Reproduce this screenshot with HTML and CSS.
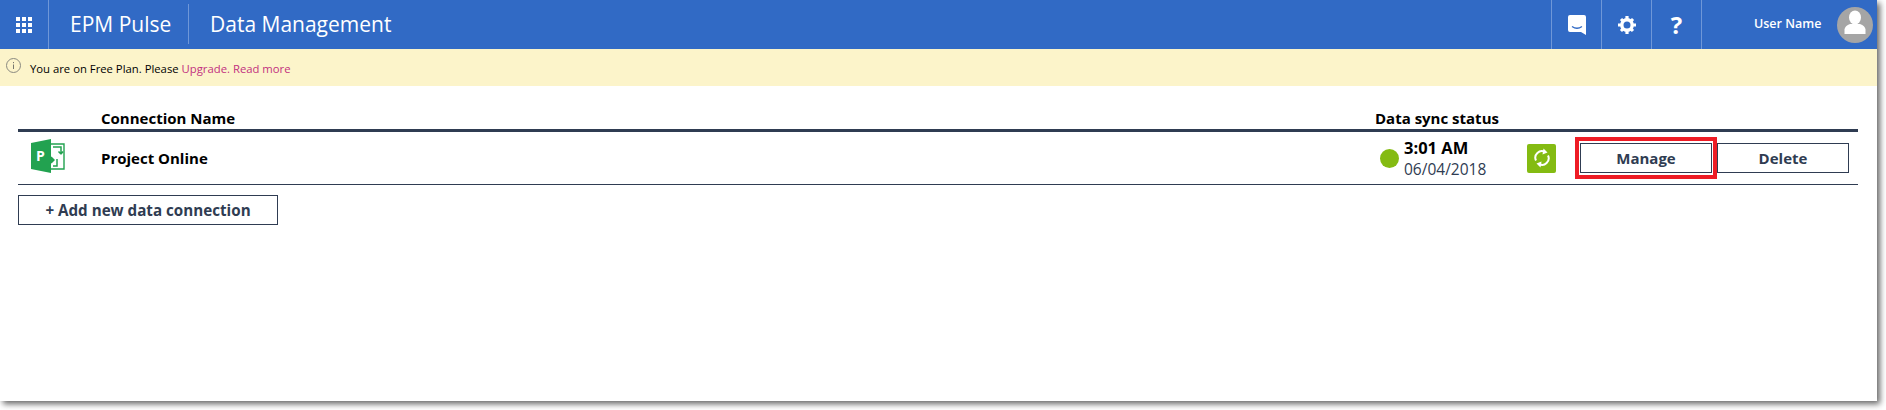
FILE: index.html
```html
<!DOCTYPE html>
<html lang="en">
<head>
    <meta charset="UTF-8">
    <meta name="viewport" content="width=device-width, initial-scale=1.0">
    <title>Data Management</title>
    <link rel="stylesheet" href="styles.css">
</head>
<body>
<div class="window">
    <header class="topbar">
        <div class="apps-cell">
            <svg width="16" height="16" viewBox="0 0 16 16" fill="#fff">
                <rect x="0" y="0" width="4" height="4"/><rect x="6" y="0" width="4" height="4"/><rect x="12" y="0" width="4" height="4"/>
                <rect x="0" y="6" width="4" height="4"/><rect x="6" y="6" width="4" height="4"/><rect x="12" y="6" width="4" height="4"/>
                <rect x="0" y="12" width="4" height="4"/><rect x="6" y="12" width="4" height="4"/><rect x="12" y="12" width="4" height="4"/>
            </svg>
        </div>
        <div class="brand">EPM Pulse</div>
        <div class="page-title">Data Management</div>
        <div class="top-icon">
            <svg width="18" height="20" viewBox="0 0 18 20">
                <path d="M2 0H16a2 2 0 0 1 2 2V20L13 17H2a2 2 0 0 1-2-2V2a2 2 0 0 1 2-2Z" fill="#fff"/>
                <path d="M4 11.5Q9 15 14 11.5" fill="none" stroke="#316ac5" stroke-width="1.3"/>
            </svg>
        </div>
        <div class="top-icon">
            <svg width="18" height="18" viewBox="0 0 18 18">
                <circle cx="9" cy="9" r="5.2" fill="none" stroke="#fff" stroke-width="3.4"/>
                <path d="M7.4 0h3.2v3h-3.2zM7.4 15h3.2v3h-3.2zM0 7.4h3v3.2H0zM15 7.4h3v3.2h-3zM1.9 4.1l2.2-2.2 2.1 2.1-2.2 2.2zM11.8 14l2.2-2.2 2.1 2.1-2.2 2.2zM1.9 13.9l2.1-2.1 2.2 2.2-2.2 2.1zM11.8 4l2.2-2.1 2.1 2.2-2.1 2.1z" fill="#fff"/>
            </svg>
        </div>
        <div class="top-icon help">?</div>
        <div class="user-name">User Name</div>
        <div class="avatar">
            <svg width="36" height="36" viewBox="0 0 36 36">
                <circle cx="18" cy="18" r="18" fill="#a5a5a5"/>
                <ellipse cx="18" cy="10.5" rx="6" ry="7" fill="#fff"/>
                <path d="M7.5 27V22.5Q8 18.5 13 17H23Q28 18.5 28.5 22.5V27Z" fill="#fff"/>
            </svg>
        </div>
    </header>

    <div class="notice">
        <svg class="notice-icon" width="15" height="15" viewBox="0 0 15 15">
            <circle cx="7.5" cy="7.5" r="7" fill="none" stroke="#8a8a80" stroke-width="1"/>
            <path d="M7.5 6.5V11M7.5 4V5.2" stroke="#77776f" stroke-width="1"/>
        </svg>
        <span>You are on Free Plan. Please <a href="#" class="notice-link">Upgrade.</a> <a href="#" class="notice-link">Read more</a></span>
    </div>

    <main class="content">
        <div class="conn-head">
            <div class="col-icon"></div>
            <div class="col-name">Connection Name</div>
            <div class="col-status">Data sync status</div>
        </div>
        <div class="conn-row">
            <div class="col-icon">
                <svg width="34" height="34" viewBox="0 0 34 34">
                    <path d="M12 5H33V30H12Z" fill="#fff" stroke="#22a250" stroke-width="1.4"/>
                    <path d="M22 8H30V15M30 15L27.5 12.5M30 15L32 12.5" fill="none" stroke="#22a250" stroke-width="1.5"/>
                    <path d="M22 27H26V20" fill="none" stroke="#22a250" stroke-width="1.5"/>
                    <path d="M20.5 17.5L24 21L20.5 24.5L17 21Z" fill="#22a250"/>
                    <path d="M0 4L20 0V34L0 30Z" fill="#22a250"/>
                    <text class="logo-letter" x="5" y="22">P</text>
                </svg>
            </div>
            <div class="col-name conn-name">Project Online</div>
            <div class="col-status sync">
                <span class="sync-dot"></span>
                <div class="sync-time">
                    <div class="time">3:01 AM</div>
                    <div class="date">06/04/2018</div>
                </div>
            </div>
            <div class="refresh">
                <svg width="18" height="20" viewBox="0 0 18 20" fill="none" stroke="#fff" stroke-width="2">
                    <path d="M3 12.5A6.5 6.5 0 0 1 12 4"/>
                    <path d="M15 7.5A6.5 6.5 0 0 1 6 16"/>
                    <path d="M10.5 0.5L14.5 4.5L9.5 6.5Z" fill="#fff" stroke="none"/>
                    <path d="M7.5 19.5L3.5 15.5L8.5 13.5Z" fill="#fff" stroke="none"/>
                </svg>
            </div>
            <div class="row-actions">
                <div class="manage-wrap">
                    <button class="btn btn-row">Manage</button>
                    <span class="callout"></span>
                </div>
                <button class="btn btn-row">Delete</button>
            </div>
        </div>
        <button class="btn btn-add">+ Add new data connection</button>
    </main>
</div>
</body>
</html>
```

FILE: styles.css
```css
html, body {
    margin: 0;
    height: 100%;
    background-color: #fff;
    overflow: hidden;
}
body {
    font-family: "Open Sans", "Noto Sans", Arial, sans-serif;
    color: #000;
}
.window {
    width: 1877px;
    height: 401px;
    background-color: #fff;
    box-shadow: 3px 3px 6px rgba(0,0,0,0.6);
}

/* top bar */
.topbar {
    display: flex;
    align-items: stretch;
    height: 49px;
    background-color: #316ac5;
    color: #fff;
}
.apps-cell {
    width: 48px;
    display: flex;
    align-items: center;
    justify-content: center;
    border-right: 1px solid #6f97d8;
}
.brand {
    font-size: 21px;
    line-height: 49px;
    padding: 0 21px;
    width: 98px;
    white-space: nowrap;
    position: relative;
}
.brand::after {
    content: "";
    position: absolute;
    right: 0;
    top: 4px;
    bottom: 5px;
    border-right: 1px solid #6f97d8;
}
.page-title {
    font-size: 21px;
    line-height: 49px;
    padding-left: 21px;
    flex: 1;
}
.top-icon {
    width: 49px;
    display: flex;
    align-items: center;
    justify-content: center;
    border-left: 1px solid #6f97d8;
}
.help {
    font-size: 24px;
    font-weight: 700;
    border-right: 1px solid #6f97d8;
}
.user-name {
    font-size: 12.5px;
    font-weight: 600;
    line-height: 47px;
    width: 124px;
    padding-left: 52px;
    box-sizing: border-box;
    white-space: nowrap;
}
.avatar {
    display: flex;
    align-items: center;
    padding: 0 4px 0 11px;
}

/* plan notice */
.notice {
    display: flex;
    align-items: center;
    height: 37px;
    padding: 1px 0 0 6px;
    box-sizing: border-box;
    background-color: #fcf4ca;
    font-size: 11.3px;
}
.notice-icon {
    margin: 0 9px 5px 0;
}
.notice-link {
    color: #c2307f;
    text-decoration: none;
}

/* connections */
.content {
    padding: 0 19px 0 18px;
}
.conn-head {
    display: flex;
    height: 43px;
    align-items: flex-end;
    border-bottom: 3px solid #2f3c52;
    font-size: 15px;
    font-weight: 700;
    line-height: 21px;
}
.conn-row {
    display: flex;
    align-items: center;
    height: 52px;
    border-bottom: 1px solid #2f3c52;
}
.col-icon {
    flex-shrink: 0;
    width: 83px;
    padding-left: 13px;
    box-sizing: border-box;
    display: flex;
}
.conn-row .col-icon {
    padding-bottom: 4px;
}
.col-name {
    flex-shrink: 0;
    width: 1274px;
}
.conn-name {
    font-size: 15px;
    font-weight: 700;
}
.col-status {
    flex-shrink: 0;
    white-space: nowrap;
}
.sync {
    display: flex;
    align-items: center;
    width: 152px;
    padding-left: 5px;
    box-sizing: border-box;
}
.sync-dot {
    width: 19px;
    height: 19px;
    margin-right: 5px;
    border-radius: 50%;
    background-color: #84bb12;
}
.sync-time {
    padding-top: 2px;
}
.time {
    font-size: 16.5px;
    font-weight: 700;
    line-height: 20px;
}
.date {
    font-size: 15.5px;
    line-height: 22px;
    color: #2f3c52;
}
.refresh {
    flex-shrink: 0;
    width: 29px;
    height: 29px;
    border-radius: 2px;
    background-color: #84bb12;
    display: flex;
    align-items: center;
    justify-content: center;
}
.row-actions {
    flex-shrink: 0;
    display: flex;
    gap: 5px;
    margin-left: 24px;
}
.manage-wrap {
    position: relative;
    display: flex;
}
.btn {
    font-family: inherit;
    font-size: 15px;
    font-weight: 700;
    color: #2f3c52;
    background-color: #fff;
    border: 1px solid #2f3c52;
    padding: 0;
    cursor: pointer;
}
.btn-row {
    width: 132px;
    height: 30px;
}
.btn-add {
    display: block;
    width: 260px;
    height: 30px;
    margin-top: 10px;
    font-size: 15.2px;
}
.callout {
    position: absolute;
    left: -5px;
    top: -6px;
    width: 134px;
    height: 34px;
    border: 4px solid #ee1c25;
}
.logo-letter {
    font-family: "Open Sans", Arial, sans-serif;
    font-size: 14px;
    font-weight: 700;
    fill: #fff;
}
```
